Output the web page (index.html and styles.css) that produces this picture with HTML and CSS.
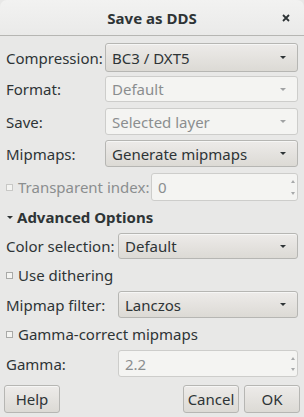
FILE: index.html
```html
<!DOCTYPE html>
<html>
<head>
<meta charset="utf-8">
<link rel="stylesheet" href="styles.css">
</head>
<body>
<div class="window">
  <div class="titlebar">
    <span class="title">Save as DDS</span>
    <svg class="close" width="8" height="8" viewBox="0 0 8 8"><path d="M1 1L7 7M7 1L1 7" stroke="#2e3436" stroke-width="1.8" fill="none"/></svg>
  </div>
  <div class="content">
    <div class="row r-comp">
      <span class="label w99">Compression:</span>
      <div class="combo"><span>BC3 / DXT5</span><i class="arrow"></i></div>
    </div>
    <div class="row r-fmt">
      <span class="label w99">Format:</span>
      <div class="combo disabled"><span>Default</span><i class="arrow"></i></div>
    </div>
    <div class="row r-save">
      <span class="label w99">Save:</span>
      <div class="combo disabled"><span>Selected layer</span><i class="arrow"></i></div>
    </div>
    <div class="row r-mip">
      <span class="label w99">Mipmaps:</span>
      <div class="combo"><span>Generate mipmaps</span><i class="arrow"></i></div>
    </div>
    <div class="row r-trans">
      <span class="check disabled-text"><i class="box"></i>Transparent index:</span>
      <div class="spin disabled"><span>0</span><i class="spinarrows"><b class="up"></b><b class="down"></b></i></div>
    </div>
    <div class="expander"><i class="exp-arrow"></i>Advanced Options</div>
    <div class="row r-color">
      <span class="label w112">Color selection:</span>
      <div class="combo"><span>Default</span><i class="arrow"></i></div>
    </div>
    <div class="check r-dither"><i class="box"></i>Use dithering</div>
    <div class="row r-filter">
      <span class="label w112">Mipmap filter:</span>
      <div class="combo"><span>Lanczos</span><i class="arrow"></i></div>
    </div>
    <div class="check r-gamma-c"><i class="box"></i>Gamma-correct mipmaps</div>
    <div class="row r-gamma">
      <span class="label w112">Gamma:</span>
      <div class="spin disabled"><span>2.2</span><i class="spinarrows"><b class="up"></b><b class="down"></b></i></div>
    </div>
    <div class="buttons">
      <button class="btn help">Help</button>
      <span class="spacer"></span>
      <button class="btn">Cancel</button>
      <button class="btn">OK</button>
    </div>
  </div>
</div>
</body>
</html>
```
FILE: styles.css
```css
* { box-sizing: border-box; }
html, body { margin: 0; padding: 0; }
body {
  width: 304px;
  height: 417px;
  overflow: hidden;
  background: #e8e8e7;
  font-family: "Noto Sans", "Open Sans", sans-serif;
  font-size: 15px;
  color: #2e3436;
}
.window {
  width: 304px;
  height: 417px;
  background: #e8e8e7;
}
.titlebar {
  height: 36px;
  border-bottom: 1px solid #b6b6b3;
  background: linear-gradient(#f2f2f1, #eaeae9);
  border-radius: 7px 7px 0 0;
  display: flex;
  align-items: center;
  justify-content: center;
  position: relative;
}
.title {
  font-weight: bold;
  font-size: 15px;
  color: #2e3436;
}
.close {
  position: absolute;
  right: 14px;
  top: 14px;
}
.content {
  padding: 7px 6px 0 6px;
}
.row {
  display: flex;
  align-items: center;
}
.label { flex: none; }
.w99 { width: 99px; }
.w112 { width: 112px; }
.combo, .spin {
  flex: 1;
  height: 28px;
  border: 1px solid #b6b6b3;
  border-radius: 3px;
  background: linear-gradient(#edebe9, #dcdad5);
  display: flex;
  align-items: center;
  padding: 0 6px 0 6px;
  position: relative;
  box-shadow: inset 0 1px #f6f6f5;
}
.combo span, .spin span { flex: 1; }
.combo.disabled, .spin.disabled {
  background: #f4f4f2;
  border-color: #cdcdcb;
  box-shadow: none;
  color: #8b8e8f;
}
.arrow {
  width: 0; height: 0;
  border-left: 3px solid transparent;
  border-right: 3px solid transparent;
  border-top: 3px solid #2e3436;
  margin-right: 5px;
}
.combo.disabled .arrow { border-top-color: #a0a2a3; }
.r-comp { height: 29px; }
.r-comp .combo { height: 29px; }
.r-fmt { margin-top: 4px; }
.r-fmt .combo { height: 26px; }
.r-save { margin-top: 6px; }
.r-save .combo { height: 27px; }
.r-mip { margin-top: 5px; }
.r-mip .combo { height: 27px; }
.r-trans { margin-top: 6px; }
.check {
  display: flex;
  align-items: center;
  flex: none;
}
.box {
  width: 7px; height: 7px;
  border: 1px solid #a9aaa8;
  background: #f4f4f2;
  margin: 0 5px 0 0;
  display: inline-block;
}
.disabled-text { color: #8b8e8f; width: 145px; }
.disabled-text .box { border-color: #c8c8c6; }
.spin { padding-right: 0; }
.spinarrows {
  width: 8px;
  align-self: stretch;
  display: flex;
  flex-direction: column;
  justify-content: space-between;
  align-items: center;
  padding: 6px 0 5px 0;
}
.spinarrows b { width: 0; height: 0; border-left: 2px solid transparent; border-right: 2px solid transparent; }
.spinarrows .up { border-bottom: 3px solid #a7a9aa; }
.spinarrows .down { border-top: 3px solid #a7a9aa; }
.r-trans .spin { height: 28px; }
.expander {
  height: 32px;
  display: flex;
  align-items: center;
  font-weight: bold;
  padding-left: 1px;
}
.exp-arrow {
  width: 0; height: 0;
  border-left: 3px solid transparent;
  border-right: 3px solid transparent;
  border-top: 3px solid #2e3436;
  margin-right: 4px;
}
.r-color .combo { height: 26px; }
.r-dither { height: 32px; }
.r-filter .combo { height: 27px; }
.r-gamma-c { height: 32px; }
.r-gamma .spin { height: 27px; }
.buttons {
  display: flex;
  margin: 8px -2px 0 -2px;
  gap: 5px;
}
.spacer { flex: 1; }
.btn {
  width: 56px;
  height: 28px;
  font-family: inherit;
  font-size: 15px;
  color: #2e3436;
  border: 1px solid #b6b6b3;
  border-radius: 3px;
  background: linear-gradient(#edebe9, #dcdad5);
  box-shadow: inset 0 1px #f6f6f5;
  padding: 0;
}
```
